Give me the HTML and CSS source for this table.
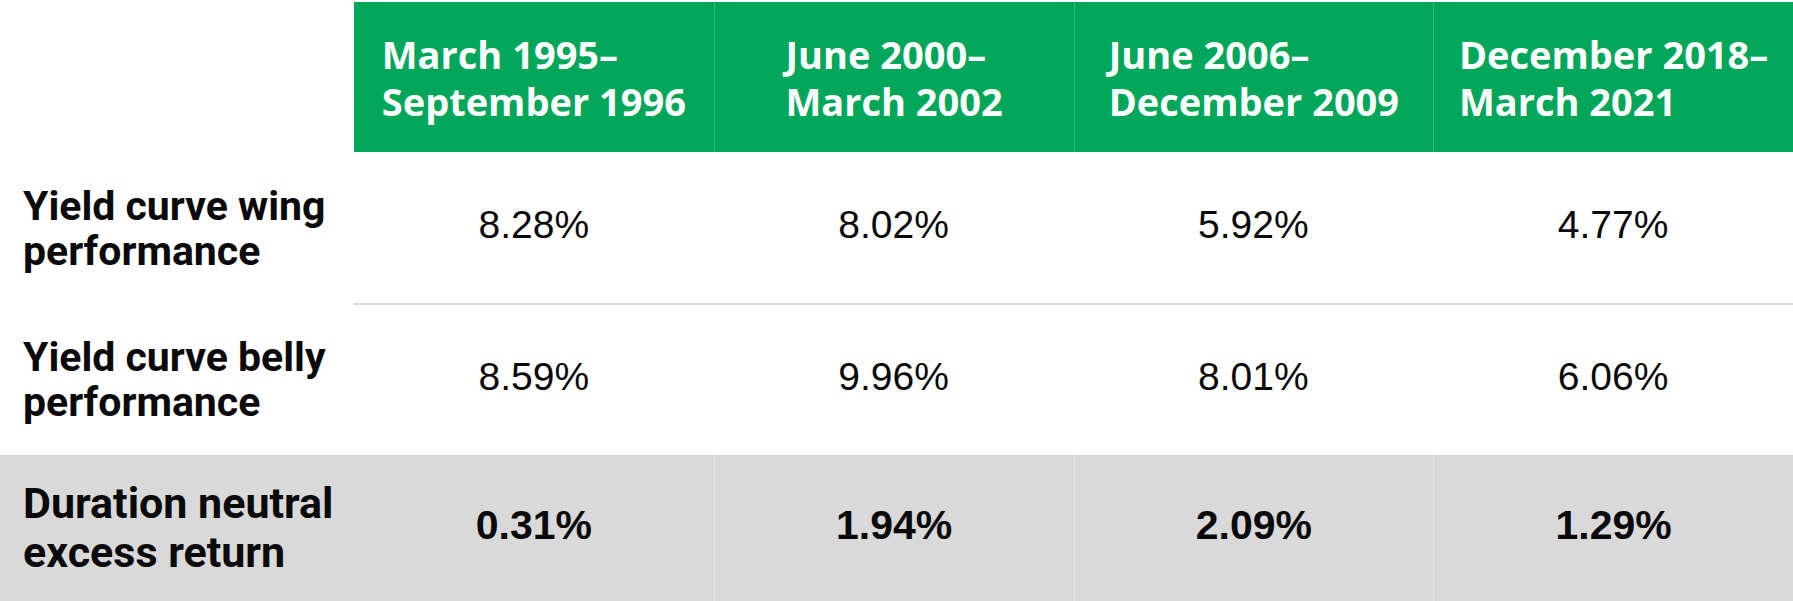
FILE: index.html
```html
<!DOCTYPE html>
<html lang="en">
<head>
<meta charset="utf-8">
<title>Yield curve performance</title>
<link rel="stylesheet" href="styles.css">
</head>
<body>
<div class="table">
  <div class="row head">
    <div class="cell corner"></div>
    <div class="cell hcell"><div class="htext">March 1995–<br>September 1996</div></div>
    <div class="cell hcell"><div class="htext">June 2000–<br>March 2002</div></div>
    <div class="cell hcell"><div class="htext">June 2006–<br>December 2009</div></div>
    <div class="cell hcell"><div class="htext">December 2018–<br>March 2021</div></div>
  </div>
  <div class="row r1">
    <div class="cell label">Yield curve wing<br>performance</div>
    <div class="cell val">8.28%</div>
    <div class="cell val">8.02%</div>
    <div class="cell val">5.92%</div>
    <div class="cell val">4.77%</div>
  </div>
  <div class="row r2">
    <div class="cell label">Yield curve belly<br>performance</div>
    <div class="cell val">8.59%</div>
    <div class="cell val">9.96%</div>
    <div class="cell val">8.01%</div>
    <div class="cell val">6.06%</div>
  </div>
  <div class="row total">
    <div class="cell label">Duration neutral<br>excess return</div>
    <div class="cell val">0.31%</div>
    <div class="cell val">1.94%</div>
    <div class="cell val">2.09%</div>
    <div class="cell val">1.29%</div>
  </div>
</div>
</body>
</html>
```
FILE: styles.css
```css
html, body {
  margin: 0;
  padding: 0;
  background: #ffffff;
}
body {
  width: 1793px;
  height: 601px;
  overflow: hidden;
  font-family: Roboto, "Liberation Sans", sans-serif;
  color: #0a0a0a;
}
.table {
  padding-top: 2px;
}
.row {
  display: grid;
  grid-template-columns: 354px repeat(4, 1fr);
}
.cell {
  display: flex;
  align-items: center;
}
.head {
  height: 150px;
}
.hcell {
  background: #00a659;
  justify-content: center;
  border-left: 1px solid rgba(255, 255, 255, 0.22);
}
.head .hcell:nth-child(2) {
  border-left: none;
}
.htext {
  font-family: "Open Sans", "Noto Sans", sans-serif;
  font-weight: 700;
  font-size: 38px;
  line-height: 47px;
  color: #ffffff;
  text-align: left;
  padding-top: 2px;
}
.label {
  padding-left: 23px;
  font-weight: 700;
  font-size: 41px;
  line-height: 45px;
}
.val {
  justify-content: center;
  font-family: "Liberation Sans Narrow", "Liberation Sans", sans-serif;
  font-size: 39px;
  font-weight: 400;
  padding-bottom: 6px;
}
.r1 {
  height: 153px;
}
.r1 .val {
  border-bottom: 2px solid #dcdcdc;
}
.r2 {
  height: 150px;
}
.total {
  height: 146px;
  background: #d9d9d9;
}
.total .label {
  font-size: 43px;
  line-height: 49px;
}
.total .val {
  font-weight: 700;
  font-size: 41px;
  border-left: 1px solid #e4e4e4;
}
.total .val:nth-child(2) {
  border-left: none;
}
```
